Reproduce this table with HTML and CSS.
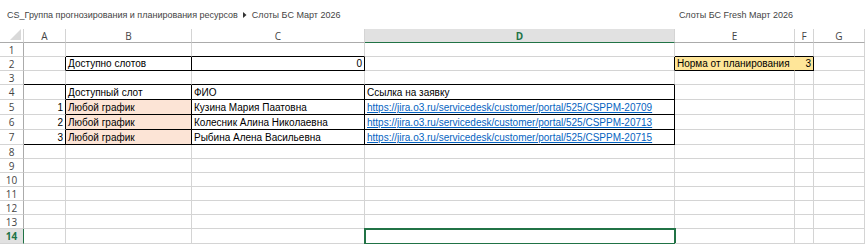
FILE: index.html
```html
<!DOCTYPE html>
<html lang="ru">
<head>
  <meta charset="UTF-8">
  <title>Слоты БС Март 2026</title>
  <link rel="stylesheet" href="styles.css">
</head>
<body>

  <div class="topbar">
    <div class="crumbs">
      <span>CS_Группа прогнозирования и планирования ресурсов</span>
      <svg class="crumb-arrow" width="4" height="6" viewBox="0 0 4 6"><path d="M0 0 L3.5 3 L0 6 Z" fill="#333"/></svg>
      <span>Слоты БС Март 2026</span>
    </div>
    <div class="sheet-title">Слоты БС Fresh Март 2026</div>
  </div>

  <div class="sheet">
    <!-- заголовки столбцов -->
    <div class="row head">
      <div class="c corner"><svg width="11" height="11" viewBox="0 0 11 11"><path d="M11 0 L11 11 L0 11 Z" fill="#d9d9d9"/></svg></div>
      <div class="c ch">A</div>
      <div class="c ch">B</div>
      <div class="c ch">C</div>
      <div class="c ch active">D</div>
      <div class="c ch">E</div>
      <div class="c ch">F</div>
      <div class="c ch">G</div>
    </div>

    <div class="row">
      <div class="c rh">1</div>
      <div class="c"></div>
      <div class="c bb"></div>
      <div class="c bb"></div>
      <div class="c"></div>
      <div class="c bb"></div>
      <div class="c bb"></div>
      <div class="c"></div>
    </div>

    <div class="row">
      <div class="c rh">2</div>
      <div class="c br"></div>
      <div class="c bb br">Доступно слотов</div>
      <div class="c bb br num">0</div>
      <div class="c br"></div>
      <div class="c bb gold no-r">Норма от планирования</div>
      <div class="c bb br gold num">3</div>
      <div class="c"></div>
    </div>

    <div class="row">
      <div class="c rh">3</div>
      <div class="c bb"></div>
      <div class="c bb"></div>
      <div class="c bb"></div>
      <div class="c bb"></div>
      <div class="c"></div>
      <div class="c"></div>
      <div class="c"></div>
    </div>

    <div class="row tall">
      <div class="c rh">4</div>
      <div class="c br"></div>
      <div class="c bb br">Доступный слот</div>
      <div class="c bb br">ФИО</div>
      <div class="c bb br">Ссылка на заявку</div>
      <div class="c"></div>
      <div class="c"></div>
      <div class="c"></div>
    </div>

    <div class="row tall">
      <div class="c rh">5</div>
      <div class="c br num">1</div>
      <div class="c bb br peach">Любой график</div>
      <div class="c bb br">Кузина Мария Паатовна</div>
      <div class="c bb br"><a class="link" href="#">https://jira.o3.ru/servicedesk/customer/portal/525/CSPPM-20709</a></div>
      <div class="c"></div>
      <div class="c"></div>
      <div class="c"></div>
    </div>

    <div class="row tall">
      <div class="c rh">6</div>
      <div class="c br num">2</div>
      <div class="c bb br peach">Любой график</div>
      <div class="c bb br">Колесник Алина Николаевна</div>
      <div class="c bb br"><a class="link" href="#">https://jira.o3.ru/servicedesk/customer/portal/525/CSPPM-20713</a></div>
      <div class="c"></div>
      <div class="c"></div>
      <div class="c"></div>
    </div>

    <div class="row tall">
      <div class="c rh">7</div>
      <div class="c bb br num">3</div>
      <div class="c bb br peach">Любой график</div>
      <div class="c bb br">Рыбина Алена Васильевна</div>
      <div class="c bb br"><a class="link" href="#">https://jira.o3.ru/servicedesk/customer/portal/525/CSPPM-20715</a></div>
      <div class="c"></div>
      <div class="c"></div>
      <div class="c"></div>
    </div>

    <div class="row">
      <div class="c rh">8</div>
      <div class="c"></div><div class="c"></div><div class="c"></div><div class="c"></div><div class="c"></div><div class="c"></div><div class="c"></div>
    </div>
    <div class="row">
      <div class="c rh">9</div>
      <div class="c"></div><div class="c"></div><div class="c"></div><div class="c"></div><div class="c"></div><div class="c"></div><div class="c"></div>
    </div>
    <div class="row">
      <div class="c rh">10</div>
      <div class="c"></div><div class="c"></div><div class="c"></div><div class="c"></div><div class="c"></div><div class="c"></div><div class="c"></div>
    </div>
    <div class="row">
      <div class="c rh">11</div>
      <div class="c"></div><div class="c"></div><div class="c"></div><div class="c"></div><div class="c"></div><div class="c"></div><div class="c"></div>
    </div>
    <div class="row">
      <div class="c rh">12</div>
      <div class="c"></div><div class="c"></div><div class="c"></div><div class="c"></div><div class="c"></div><div class="c"></div><div class="c"></div>
    </div>
    <div class="row">
      <div class="c rh">13</div>
      <div class="c"></div><div class="c"></div><div class="c"></div><div class="c"></div><div class="c"></div><div class="c"></div><div class="c"></div>
    </div>
    <div class="row tall">
      <div class="c rh active">14</div>
      <div class="c"></div><div class="c"></div><div class="c"></div><div class="c selected"></div><div class="c"></div><div class="c"></div><div class="c"></div>
    </div>
  </div>

</body>
</html>
```

FILE: styles.css
```css
body {
  margin: 0;
  background: #fff;
  font-family: 'Liberation Sans', Arial, sans-serif;
  color: #000;
  overflow: hidden;
}

/* верхняя строка с путём к файлу */
.topbar {
  height: 29px;
  display: flex;
  align-items: center;
  justify-content: space-between;
  padding: 0 72px 0 7px;
  font-family: 'Liberation Sans', Arial, sans-serif;
  font-size: 9px;
  color: #444;
  box-sizing: border-box;
}

.crumbs {
  display: flex;
  align-items: center;
  gap: 5px;
}

.crumb-arrow {
  display: block;
}

/* сетка листа */
.row {
  display: grid;
  grid-template-columns: 24px 42px 126px 173px 310px 120px 19px 51px;
  height: 14px;
}

.row.tall {
  height: 15px;
}

.c {
  box-sizing: border-box;
  border-right: 1px solid #d4d4d4;
  border-bottom: 1px solid #d4d4d4;
  font-size: 10px;
  line-height: 12px;
  padding: 0 2px;
  white-space: nowrap;
  overflow: hidden;
  display: flex;
  align-items: flex-end;
}

.num {
  justify-content: flex-end;
}

.bb {
  border-bottom-color: #000;
}

.br {
  border-right-color: #000;
}

.peach {
  background: #fce4d6;
}

.gold {
  background: #ffe699;
}

.gold.no-r {
  border-right-color: #ffe699;
}

.link {
  color: #0563c1;
  text-decoration: underline;
}

.selected {
  outline: 2px solid #217346;
  outline-offset: -1px;
}

/* заголовки строк и столбцов */
.head .c {
  border-bottom-color: #ababab;
}

.ch {
  justify-content: center;
  align-items: center;
  color: #444;
  font-family: 'Open Sans', 'Noto Sans', sans-serif;
  font-size: 10px;
}

.ch.active {
  background: #e1e1e1;
  color: #217346;
  font-weight: bold;
  border-bottom: 1px solid #217346;
}

.corner {
  align-items: flex-end;
  justify-content: flex-end;
  padding: 0 2px 2px 0;
}

.corner svg {
  display: block;
}

.rh {
  justify-content: center;
  align-items: center;
  color: #444;
  font-family: 'Open Sans', 'Noto Sans', sans-serif;
  font-size: 10px;
  border-right-color: #ababab;
  padding: 0;
}

.rh.active {
  background: #e1e1e1;
  color: #217346;
  font-weight: bold;
  border-right: 1px solid #217346;
}
```
